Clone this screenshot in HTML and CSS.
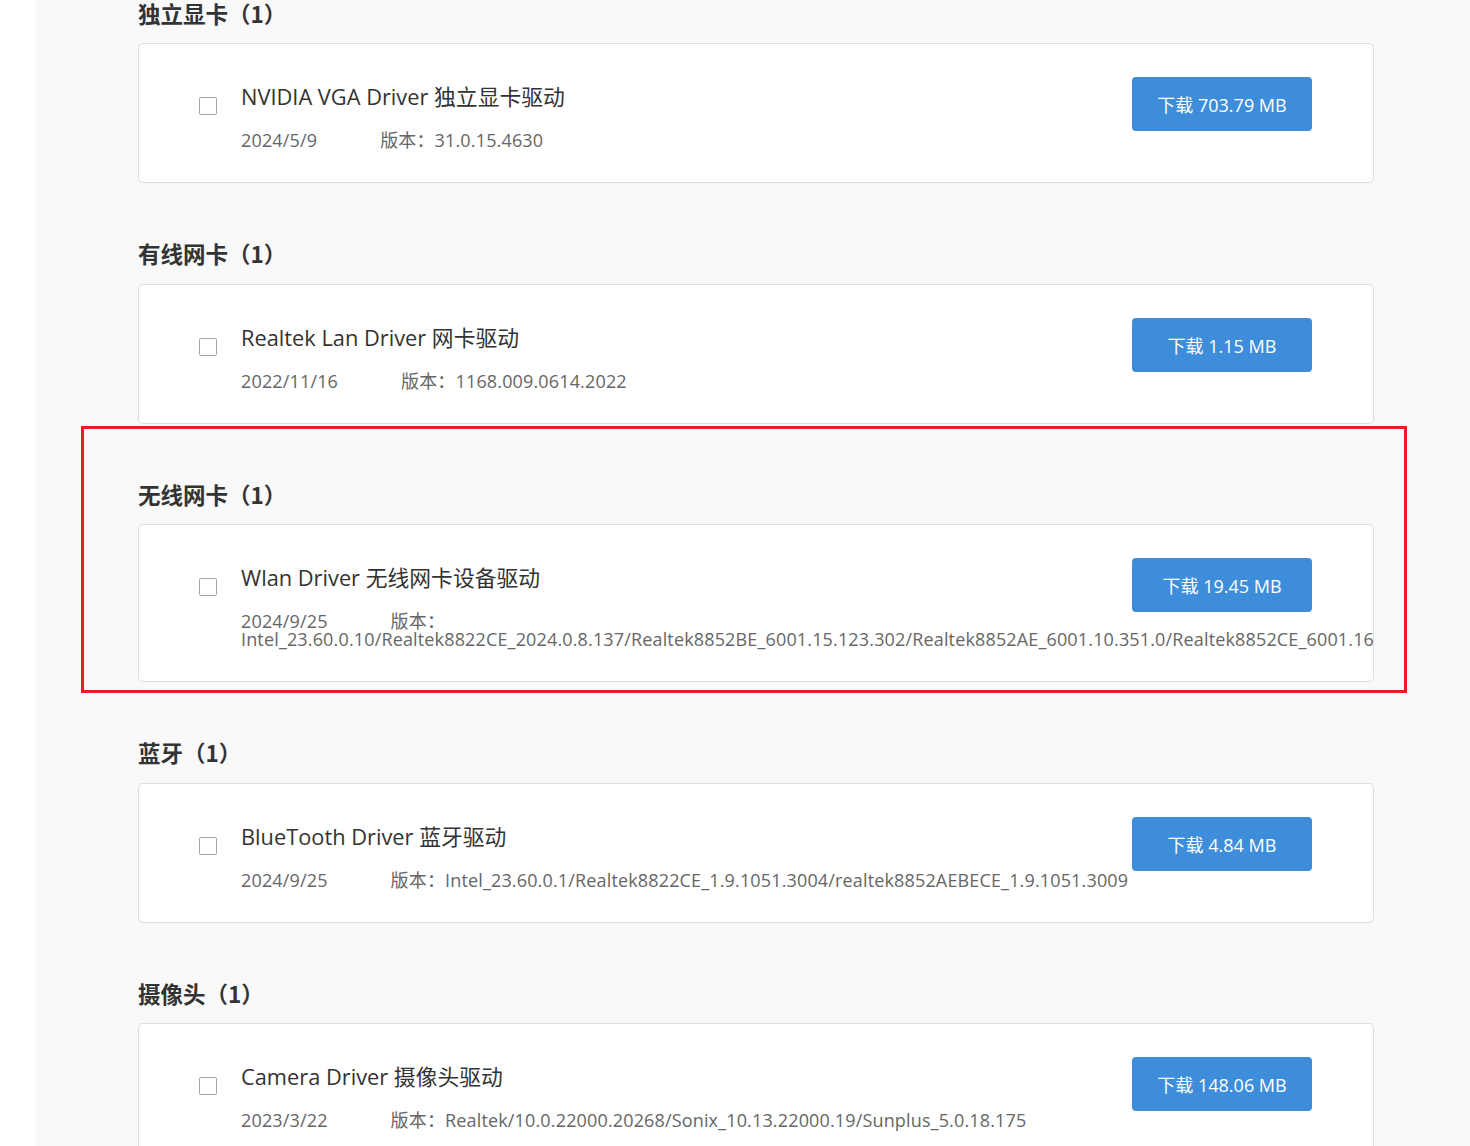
FILE: index.html
```html
<!DOCTYPE html>
<html lang="zh-CN">
<head>
<meta charset="utf-8">
<title>驱动下载</title>
<link rel="stylesheet" href="styles.css">
</head>
<body>
<div class="page">
  <div class="side"></div>
  <main class="content">
    <section class="group">
      <h2 class="group-title">独立显卡（1）</h2>
      <div class="card">
        <span class="check"></span>
        <div class="info">
          <div class="name">NVIDIA VGA Driver 独立显卡驱动</div>
          <div class="meta"><span class="date">2024/5/9</span>版本：31.0.15.4630</div>
        </div>
        <button class="dl">下载 703.79 MB</button>
      </div>
    </section>
    <section class="group">
      <h2 class="group-title">有线网卡（1）</h2>
      <div class="card">
        <span class="check"></span>
        <div class="info">
          <div class="name">Realtek Lan Driver 网卡驱动</div>
          <div class="meta"><span class="date">2022/11/16</span>版本：1168.009.0614.2022</div>
        </div>
        <button class="dl">下载 1.15 MB</button>
      </div>
    </section>
    <section class="group">
      <h2 class="group-title">无线网卡（1）</h2>
      <div class="card">
        <span class="check"></span>
        <div class="info">
          <div class="name">Wlan Driver 无线网卡设备驱动</div>
          <div class="meta"><span class="date">2024/9/25</span>版本：Intel_23.60.0.10/Realtek8822CE_2024.0.8.137/Realtek8852BE_6001.15.123.302/Realtek8852AE_6001.10.351.0/Realtek8852CE_6001.16.172.0</div>
        </div>
        <button class="dl">下载 19.45 MB</button>
      </div>
    </section>
    <section class="group">
      <h2 class="group-title">蓝牙（1）</h2>
      <div class="card">
        <span class="check"></span>
        <div class="info">
          <div class="name">BlueTooth Driver 蓝牙驱动</div>
          <div class="meta nowrap"><span class="date">2024/9/25</span>版本：Intel_23.60.0.1/Realtek8822CE_1.9.1051.3004/realtek8852AEBECE_1.9.1051.3009</div>
        </div>
        <button class="dl">下载 4.84 MB</button>
      </div>
    </section>
    <section class="group">
      <h2 class="group-title">摄像头（1）</h2>
      <div class="card">
        <span class="check"></span>
        <div class="info">
          <div class="name">Camera Driver 摄像头驱动</div>
          <div class="meta"><span class="date">2023/3/22</span>版本：Realtek/10.0.22000.20268/Sonix_10.13.22000.19/Sunplus_5.0.18.175</div>
        </div>
        <button class="dl">下载 148.06 MB</button>
      </div>
    </section>
  </main>
</div>
<div class="mark"></div>
</body>
</html>
```
FILE: styles.css
```css
html, body {
  margin: 0;
  padding: 0;
  height: 100%;
  overflow: hidden;
  background: #ffffff;
}

body {
  font-family: "Open Sans", "Noto Sans CJK SC", sans-serif;
  color: #333333;
  position: relative;
}

.page {
  display: flex;
  min-height: 100%;
}

.side {
  width: 36px;
  flex: none;
  background: #ffffff;
}

.content {
  flex: 1;
  background: #f9f9f9;
  padding: 0 96px 0 102px;
  margin-top: -2.5px;
}

.group {
  width: 1236px;
}

.group-title {
  margin: 0 0 15.5px;
  font-size: 22.5px;
  line-height: 30px;
  font-weight: 700;
  color: #333333;
  font-family: "Noto Sans CJK SC", sans-serif;
}

.card {
  display: flex;
  align-items: flex-start;
  background: #ffffff;
  border: 1px solid #dddddd;
  border-radius: 5px;
  padding: 33px 61px 33px 60px;
  margin-bottom: 55px;
  overflow: hidden;
}

.check {
  flex: none;
  width: 16px;
  height: 16px;
  border: 1px solid #a5a5a5;
  border-radius: 2px;
  margin-top: 20px;
  margin-right: 24px;
  background: #ffffff;
}

.info {
  flex: 1;
  min-width: 0;
}

.name {
  font-size: 21.8px;
  line-height: 40px;
  color: #333333;
}

.meta {
  margin-top: 14px;
  font-size: 18px;
  line-height: 18px;
  letter-spacing: 0.15px;
  color: #666666;
}

.meta.nowrap {
  white-space: nowrap;
}

.date {
  margin-right: 63px;
}

.dl {
  flex: none;
  width: 180px;
  height: 54px;
  margin-left: 4px;
  border: 0;
  border-radius: 4px;
  background: #3d8ddb;
  color: #ffffff;
  font-family: "Open Sans", "Noto Sans CJK SC", sans-serif;
  font-size: 18px;
  padding: 0;
}

.mark {
  position: absolute;
  left: 81px;
  top: 426px;
  width: 1320px;
  height: 261px;
  border: 3px solid #ed1c24;
  pointer-events: none;
}
```
